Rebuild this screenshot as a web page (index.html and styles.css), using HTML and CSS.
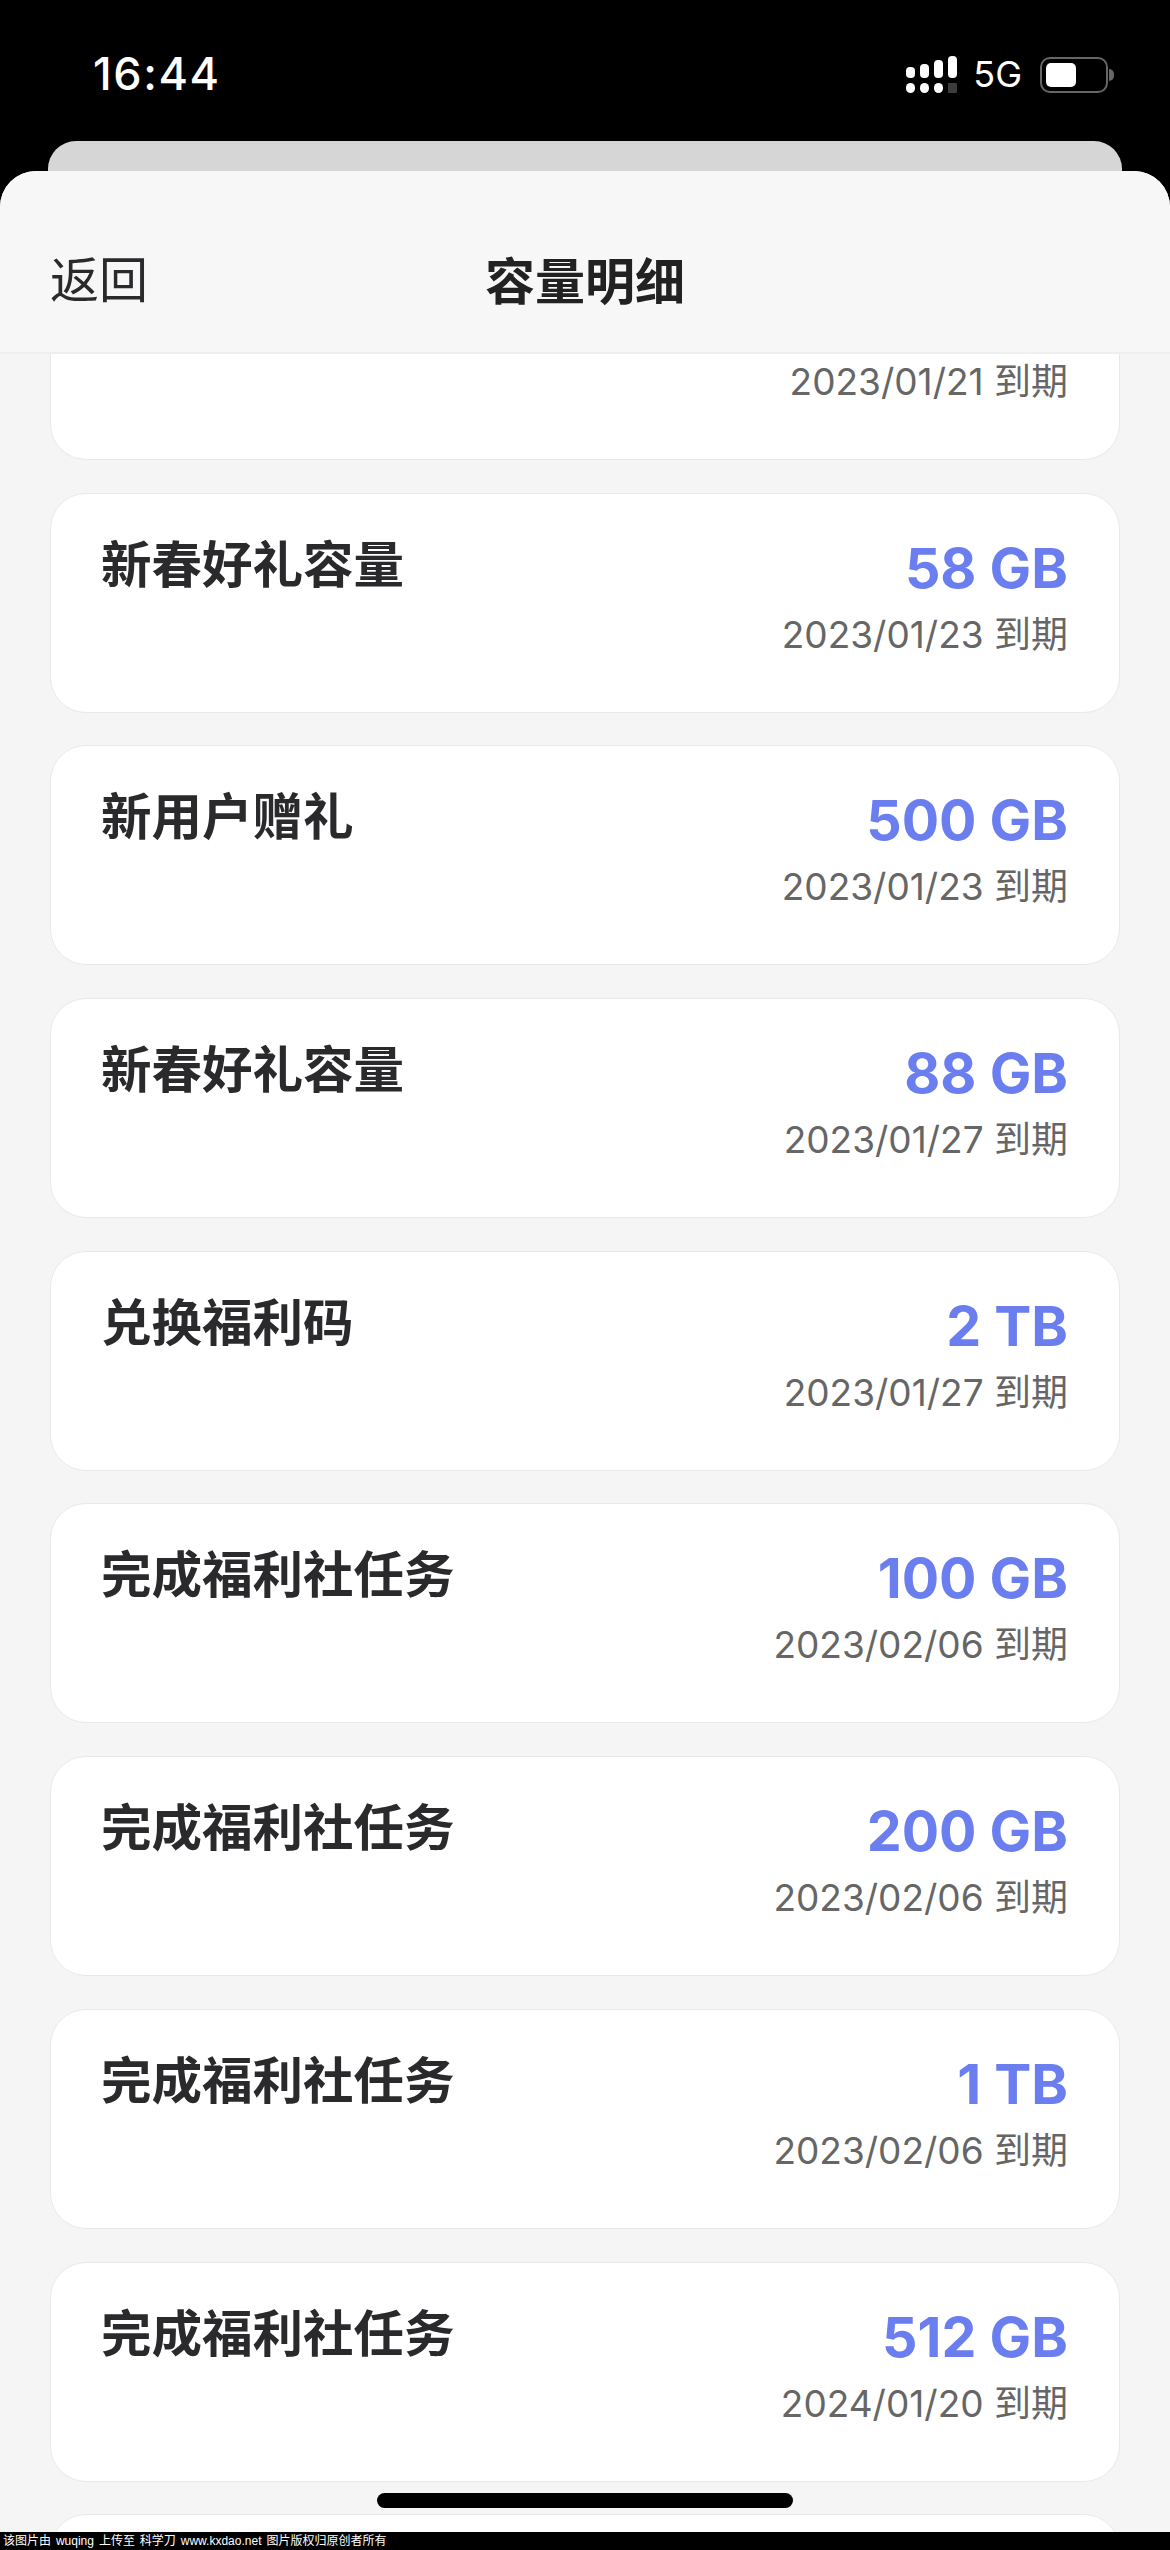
FILE: index.html
```html
<!DOCTYPE html>
<html lang="zh-CN">
<head>
    <meta charset="UTF-8">
    <meta name="viewport" content="width=device-width, initial-scale=1.0">
    <title>容量明细</title>
    <link rel="stylesheet" href="styles.css">
</head>
<body>
    <div class="page">
        <div class="status-bar">
            <span class="time">16:44</span>
            <div class="status-icons">
                <svg class="signal" width="51" height="37" viewBox="0 0 51 37">
                    <rect x="0" y="11" width="9" height="11" rx="4" fill="#fff"/>
                    <rect x="14" y="8" width="9" height="14" rx="4" fill="#fff"/>
                    <rect x="28" y="4" width="9" height="18" rx="4" fill="#fff"/>
                    <rect x="42" y="0" width="9" height="22" rx="4" fill="#fff"/>
                    <rect x="0" y="27" width="9" height="10" rx="4.5" fill="#fff"/>
                    <rect x="14" y="27" width="9" height="10" rx="4.5" fill="#fff"/>
                    <rect x="28" y="27" width="9" height="10" rx="4.5" fill="#fff"/>
                    <rect x="42" y="27" width="9" height="10" rx="1" fill="#3c3c3c"/>
                </svg>
                <span class="network">5G</span>
                <div class="battery">
                    <div class="battery-level"></div>
                </div>
            </div>
        </div>

        <div class="back-sheet"></div>

        <div class="sheet">
            <header class="nav">
                <span class="nav-back">返回</span>
                <h1 class="nav-title">容量明细</h1>
            </header>

            <main class="list">
                <div class="card card-cut">
                    <div class="card-right">
                        <div class="date">2023/01/21 到期</div>
                    </div>
                </div>
                <div class="card">
                    <div class="name">新春好礼容量</div>
                    <div class="card-right">
                        <div class="amount">58 GB</div>
                        <div class="date">2023/01/23 到期</div>
                    </div>
                </div>
                <div class="card">
                    <div class="name">新用户赠礼</div>
                    <div class="card-right">
                        <div class="amount">500 GB</div>
                        <div class="date">2023/01/23 到期</div>
                    </div>
                </div>
                <div class="card">
                    <div class="name">新春好礼容量</div>
                    <div class="card-right">
                        <div class="amount">88 GB</div>
                        <div class="date">2023/01/27 到期</div>
                    </div>
                </div>
                <div class="card">
                    <div class="name">兑换福利码</div>
                    <div class="card-right">
                        <div class="amount">2 TB</div>
                        <div class="date">2023/01/27 到期</div>
                    </div>
                </div>
                <div class="card">
                    <div class="name">完成福利社任务</div>
                    <div class="card-right">
                        <div class="amount">100 GB</div>
                        <div class="date">2023/02/06 到期</div>
                    </div>
                </div>
                <div class="card">
                    <div class="name">完成福利社任务</div>
                    <div class="card-right">
                        <div class="amount">200 GB</div>
                        <div class="date">2023/02/06 到期</div>
                    </div>
                </div>
                <div class="card">
                    <div class="name">完成福利社任务</div>
                    <div class="card-right">
                        <div class="amount">1 TB</div>
                        <div class="date">2023/02/06 到期</div>
                    </div>
                </div>
                <div class="card">
                    <div class="name">完成福利社任务</div>
                    <div class="card-right">
                        <div class="amount">512 GB</div>
                        <div class="date">2024/01/20 到期</div>
                    </div>
                </div>
                <div class="card"></div>
            </main>

            <div class="home-indicator"></div>
        </div>

        <footer class="watermark">该图片由 wuqing 上传至 科学刀 www.kxdao.net 图片版权归原创者所有</footer>
    </div>
</body>
</html>
```

FILE: styles.css
```css
* {
  box-sizing: border-box;
}

body {
  margin: 0;
  background-color: #000;
  font-family: Inter, "Noto Sans CJK SC", sans-serif;
}

.page {
  display: flex;
  flex-direction: column;
  height: 2550px;
  overflow: hidden;
}

.status-bar {
  display: flex;
  flex-shrink: 0;
  justify-content: space-between;
  align-items: flex-start;
  height: 141px;
  padding: 49px 62px 0 93px;
  color: #fff;
}

.time {
  font-size: 45px;
  font-weight: 500;
  line-height: 50px;
  letter-spacing: 1.6px;
}

.status-icons {
  display: flex;
  align-items: center;
  height: 37px;
  margin-top: 7px;
}

.network {
  margin-left: 16px;
  font-size: 36px;
  line-height: 37px;
}

.battery {
  position: relative;
  width: 68px;
  height: 36px;
  margin-left: 18px;
  padding: 4px;
  border: 2px solid #666;
  border-radius: 10px;
}

.battery::after {
  content: "";
  position: absolute;
  top: 10px;
  right: -8px;
  width: 5px;
  height: 12px;
  border-radius: 0 6px 6px 0;
  background-color: #666;
}

.battery-level {
  width: 30px;
  height: 24px;
  border-radius: 5px;
  background-color: #fff;
}

.back-sheet {
  flex-shrink: 0;
  height: 60px;
  margin: 0 48px -30px;
  border-radius: 28px 28px 0 0;
  background-color: #d6d6d6;
}

.sheet {
  position: relative;
  display: flex;
  flex: 1;
  flex-direction: column;
  min-height: 0;
  border-radius: 36px 36px 0 0;
  background-color: #f5f5f5;
  overflow: hidden;
}

.nav {
  display: flex;
  flex-shrink: 0;
  justify-content: center;
  align-items: center;
  position: relative;
  height: 183px;
  padding-top: 40px;
  border-bottom: 2px solid #efefef;
  background-color: #f7f7f7;
}

.nav-back {
  position: absolute;
  left: 50px;
  top: 82px;
  font-size: 49px;
  line-height: 56px;
  color: #2a2a2c;
}

.nav-title {
  margin: 0;
  font-size: 50px;
  font-weight: 600;
  line-height: 56px;
  color: #222;
}

.list {
  display: flex;
  flex: 1;
  flex-direction: column;
  gap: 32.7px;
  min-height: 0;
  padding: 0 50px;
  overflow: hidden;
}

.card {
  display: flex;
  flex-shrink: 0;
  justify-content: space-between;
  height: 220px;
  padding: 35px 51px 0 50px;
  border: 1px solid #e9e9e9;
  border-radius: 36px;
  background-color: #fff;
}

.card-cut {
  justify-content: flex-end;
  height: 106px;
  padding-top: 0;
  border-top: 0;
  border-radius: 0 0 36px 36px;
}

.card-cut .date {
  margin-top: 0;
}

.name {
  margin-top: 1px;
  font-size: 50.5px;
  font-weight: 600;
  line-height: 70px;
  color: #2a2a2c;
}

.card-right {
  text-align: right;
}

.amount {
  margin-top: 4px;
  font-size: 55.5px;
  font-weight: 700;
  line-height: 70px;
  color: #6b7eef;
}

.date {
  margin-top: 4px;
  font-size: 37px;
  line-height: 56px;
  color: #666;
}

.home-indicator {
  position: absolute;
  left: 377px;
  bottom: 24px;
  width: 416px;
  height: 15px;
  border-radius: 8px;
  background-color: #000;
}

.watermark {
  flex-shrink: 0;
  height: 18px;
  padding-left: 3px;
  font-family: "Liberation Sans", "Noto Sans CJK SC", sans-serif;
  font-size: 12px;
  line-height: 18px;
  word-spacing: 1.6px;
  white-space: pre;
  color: #fff;
  background-color: #000;
}
```
